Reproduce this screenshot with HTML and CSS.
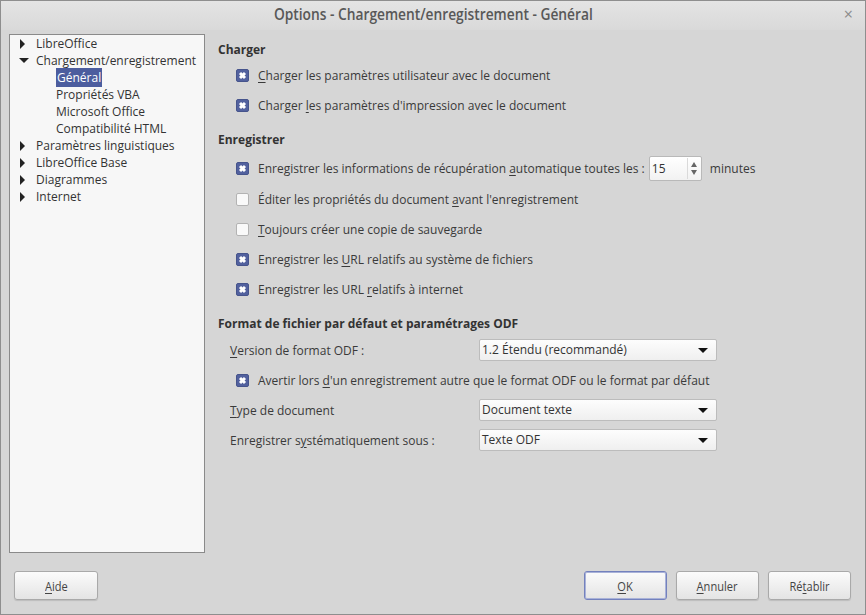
FILE: index.html
```html
<!DOCTYPE html>
<html lang="fr">
<head>
  <meta charset="UTF-8" />
  <title>Options - Chargement/enregistrement - Général</title>
  <link rel="stylesheet" href="styles.css">
</head>
<body>

  <div class="window">
    <div class="titlebar">
      <span class="title">Options - Chargement/enregistrement - Général</span>
      <span class="close">×</span>
    </div>

    <div class="body">
      <div class="tree">
        <div class="node"><span class="arrow right"></span>LibreOffice</div>
        <div class="node"><span class="arrow down"></span>Chargement/enregistrement</div>
        <div class="node child"><span class="selected">Général</span></div>
        <div class="node child">Propriétés VBA</div>
        <div class="node child">Microsoft Office</div>
        <div class="node child">Compatibilité HTML</div>
        <div class="node"><span class="arrow right"></span>Paramètres linguistiques</div>
        <div class="node"><span class="arrow right"></span>LibreOffice Base</div>
        <div class="node"><span class="arrow right"></span>Diagrammes</div>
        <div class="node"><span class="arrow right"></span>Internet</div>
      </div>

      <div class="content">
        <div class="section">
          <h3>Charger</h3>
          <label class="row"><span class="check on"></span><span><u>C</u>harger les paramètres utilisateur avec le document</span></label>
          <label class="row"><span class="check on"></span><span>Charger <u>l</u>es paramètres d'impression avec le document</span></label>
        </div>

        <div class="section save">
          <h3>Enregistrer</h3>
          <div class="row first">
            <span class="check on"></span><span>Enregistrer les informations de récupération <u>a</u>utomatique toutes les :</span>
            <div class="spin">
              <span class="spin-val">15</span>
              <span class="spin-btns"><i class="up"></i><i class="dn"></i></span>
            </div>
            <span class="unit">minutes</span>
          </div>
          <label class="row"><span class="check"></span><span>Éditer les propriétés du document <u>a</u>vant l'enregistrement</span></label>
          <label class="row"><span class="check"></span><span><u>T</u>oujours créer une copie de sauvegarde</span></label>
          <label class="row"><span class="check on"></span><span>Enregistrer les <u>U</u>RL relatifs au système de fichiers</span></label>
          <label class="row"><span class="check on"></span><span>Enregistrer les URL <u>r</u>elatifs à internet</span></label>
        </div>

        <div class="section odf">
          <h3>Format de fichier par défaut et paramétrages ODF</h3>
          <div class="row field">
            <span class="label"><u>V</u>ersion de format ODF :</span>
            <div class="select">1.2 Étendu (recommandé)<i class="caret"></i></div>
          </div>
          <label class="row"><span class="check on"></span><span>Avertir lors <u>d</u>'un enregistrement autre que le format ODF ou le format par défaut</span></label>
          <div class="row field">
            <span class="label"><u>T</u>ype de document</span>
            <div class="select">Document texte<i class="caret"></i></div>
          </div>
          <div class="row field">
            <span class="label">Enregistrer s<u>y</u>stématiquement sous :</span>
            <div class="select">Texte ODF<i class="caret"></i></div>
          </div>
        </div>
      </div>
    </div>

    <div class="footer">
      <button class="btn help"><span><u>A</u>ide</span></button>
      <div class="spacer"></div>
      <button class="btn default"><span><u>O</u>K</span></button>
      <button class="btn"><span><u>A</u>nnuler</span></button>
      <button class="btn"><span>Ré<u>t</u>ablir</span></button>
    </div>
  </div>

</body>
</html>
```

FILE: styles.css
```css
* { box-sizing: border-box; margin: 0; padding: 0; }

body {
  font-family: "Open Sans", "Noto Sans", sans-serif;
  font-size: 12px;
  color: #3a3a3a;
  background: #d6d6d6;
}

u { text-decoration: underline; text-underline-offset: 2px; }

.window {
  width: 866px;
  height: 615px;
  border: 1px solid #8e8e8e;
  background: #d6d6d6;
  display: flex;
  flex-direction: column;
}

.titlebar {
  height: 29px;
  flex: none;
  background: linear-gradient(#e4e4e4, #d9d9d9);
  display: flex;
  align-items: center;
  justify-content: center;
  position: relative;
}

.title {
  font-weight: 600;
  font-size: 16px;
  color: #585858;
  display: inline-block;
  transform: scaleX(0.86);
  margin-top: -3px;
}

.close {
  position: absolute;
  right: 12px;
  top: 2px;
  font-size: 16px;
  color: #8a8a8a;
}

.body {
  flex: 1;
  display: flex;
  padding: 4px 0 0 8px;
}

/* tree */
.tree {
  width: 196px;
  height: 519px;
  background: #f7f7f7;
  border: 1px solid #8a8a8a;
  flex: none;
}

.node {
  height: 17px;
  line-height: 17px;
  padding-left: 26px;
  position: relative;
  color: #333;
  white-space: nowrap;
}

.node.child { padding-left: 46px; }

.arrow {
  position: absolute;
  left: 9px;
  top: 4px;
  width: 0;
  height: 0;
}

.arrow.right {
  border-top: 5px solid transparent;
  border-bottom: 5px solid transparent;
  border-left: 5px solid #222;
  left: 10px;
}

.arrow.down {
  top: 6px;
  border-left: 5px solid transparent;
  border-right: 5px solid transparent;
  border-top: 5px solid #222;
}

.selected {
  background: #4c5d9e;
  color: #fff;
  padding: 1px 1px;
}

/* right side */
.content {
  flex: 1;
  padding: 6px 0 0 13px;
}

.section { margin-bottom: 10px; }
.section.save h3 { margin-bottom: 3px; }
.section.odf h3 { margin-bottom: 1px; }

h3 {
  font-size: 12px;
  font-weight: bold;
  color: #333;
  height: 20px;
  line-height: 20px;
}

.row {
  display: flex;
  align-items: center;
  height: 30px;
  padding-left: 18px;
  color: #3a3a3a;
  white-space: nowrap;
}

.row.first { height: 31px; }

.check {
  width: 13px;
  height: 13px;
  border: 1px solid #b3b3b3;
  background: #f9f9f9;
  border-radius: 2px;
  margin-right: 9px;
  position: relative;
  flex: none;
}

.check.on {
  background: #52619e;
  border-color: #46548c;
}

.check.on::before,
.check.on::after {
  content: "";
  position: absolute;
  left: 2px;
  top: 4px;
  width: 7px;
  height: 3px;
  background: #fff;
  transform: rotate(45deg);
}

.check.on::after { transform: rotate(-45deg); }

.spin {
  display: flex;
  margin-left: 4px;
  width: 53px;
  height: 25px;
  border: 1px solid #b9b9b9;
  border-radius: 2px;
  background: linear-gradient(#fff, #f2f2f2);
}

.spin-val {
  flex: 1;
  padding-left: 2px;
  line-height: 23px;
  color: #333;
}

.spin-btns {
  width: 13px;
  margin: 1px 1px 1px 0;
  border-left: 1px solid #dadada;
  display: flex;
  flex-direction: column;
  align-items: center;
  justify-content: center;
  gap: 3px;
}

.spin-btns i {
  width: 0;
  height: 0;
  border-left: 3px solid transparent;
  border-right: 3px solid transparent;
}

.spin-btns .up { border-bottom: 5px solid #666; }
.spin-btns .dn { border-top: 5px solid #666; }

.unit { margin-left: 8px; }

.row.field { padding-left: 12px; }

.label { width: 249px; }

.select {
  position: relative;
  width: 238px;
  height: 22px;
  line-height: 20px;
  padding-left: 2px;
  border: 1px solid #bcbcbc;
  border-radius: 2px;
  background: linear-gradient(#fdfdfd, #efefef);
  color: #333;
}

.caret {
  position: absolute;
  right: 8px;
  top: 8px;
  width: 0;
  height: 0;
  border-left: 5px solid transparent;
  border-right: 5px solid transparent;
  border-top: 5px solid #111;
}

/* footer */
.footer {
  height: 62px;
  flex: none;
  display: flex;
  align-items: flex-start;
  padding: 18px 14px 0 13px;
}

.spacer { flex: 1; }

.btn {
  width: 83px;
  height: 29px;
  margin-left: 9px;
  border: 1px solid #a9a9a9;
  border-radius: 3px;
  background: linear-gradient(#fbfbfb, #e4e4e4);
  box-shadow: 0 1px 1px rgba(0,0,0,0.12);
  font-family: "Open Sans", sans-serif;
  font-size: 13px;
  color: #444;
}

.btn span {
  display: inline-block;
  transform: scaleX(0.85);
}

.btn.help { margin-left: 0; width: 84px; }

.btn.default { border-color: #7381bd; box-shadow: 0 0 0 1px #a9b2d8 inset; }
```
